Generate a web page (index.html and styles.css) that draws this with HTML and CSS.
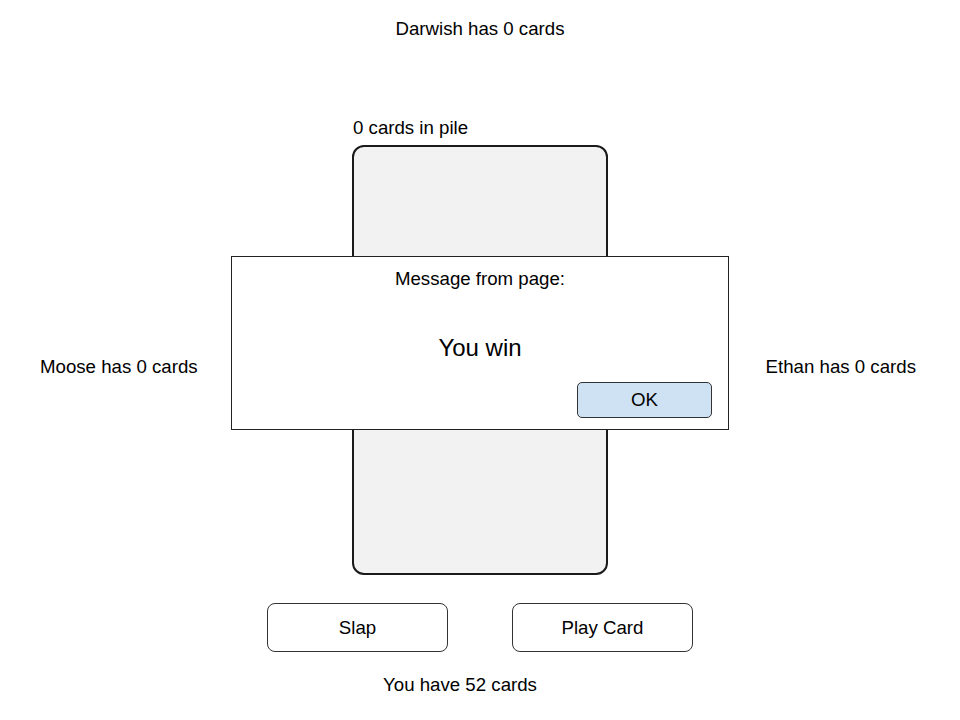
FILE: index.html
```html
<!DOCTYPE html>
<html>
<head>
<meta charset="utf-8">
<link rel="stylesheet" href="styles.css">
</head>
<body>
<div class="top">Darwish has 0 cards</div>
<div class="table">
  <div class="side left">Moose has 0 cards</div>
  <div class="center">
    <div class="pile-label">0 cards in pile</div>
    <div class="card"></div>
  </div>
  <div class="side right">Ethan has 0 cards</div>
</div>
<div class="buttons">
  <button class="btn">Slap</button>
  <button class="btn">Play Card</button>
</div>
<div class="bottom">You have 52 cards</div>

<div class="dialog">
  <div class="dialog-title">Message from page:</div>
  <div class="dialog-msg">You win</div>
  <button class="ok">OK</button>
</div>
</body>
</html>
```
FILE: styles.css
```css
html, body {
  margin: 0;
  padding: 0;
  background: #fff;
}
body {
  font-family: "Liberation Sans", Arial, sans-serif;
  font-size: 18.67px;
  line-height: 21px;
  color: #000;
  width: 960px;
  height: 720px;
  position: relative;
}
.top {
  padding-top: 18px;
  text-align: center;
}
.table {
  margin-top: 78px;
  display: grid;
  grid-template-columns: 352px 256px 1fr;
}
.side {
  padding-top: 239px;
}
.left {
  padding-left: 40px;
}
.right {
  text-align: right;
  padding-right: 44px;
}
.pile-label {
  padding-left: 1px;
  height: 28px;
}
.card {
  box-sizing: border-box;
  height: 430px;
  background: #f2f2f2;
  border: 2px solid #1a1a1a;
  border-radius: 12px;
}
.buttons {
  margin-top: 28px;
  display: flex;
  justify-content: center;
  gap: 64px;
}
.btn {
  box-sizing: border-box;
  width: 181px;
  height: 49px;
  background: #fff;
  border: 1px solid #333;
  border-radius: 8px;
  font-family: "Liberation Sans", Arial, sans-serif;
  font-size: 18.67px;
  color: #000;
  padding: 0;
}
.bottom {
  margin-top: 22px;
  text-align: center;
  padding-right: 40px;
}
.dialog {
  position: absolute;
  left: 231px;
  top: 256px;
  width: 498px;
  height: 174px;
  box-sizing: border-box;
  background: #fff;
  border: 1px solid #222;
  padding: 11px 16px 11px;
  display: flex;
  flex-direction: column;
}
.dialog-title {
  text-align: center;
}
.dialog-msg {
  margin-top: 45px;
  text-align: center;
  font-size: 24px;
  line-height: 28px;
}
.ok {
  margin-top: 20px;
  align-self: flex-end;
  box-sizing: border-box;
  width: 135px;
  height: 36px;
  background: #cfe2f3;
  border: 1px solid #333;
  border-radius: 5px;
  font-family: "Liberation Sans", Arial, sans-serif;
  font-size: 18.67px;
  color: #000;
  padding: 0;
}
```
